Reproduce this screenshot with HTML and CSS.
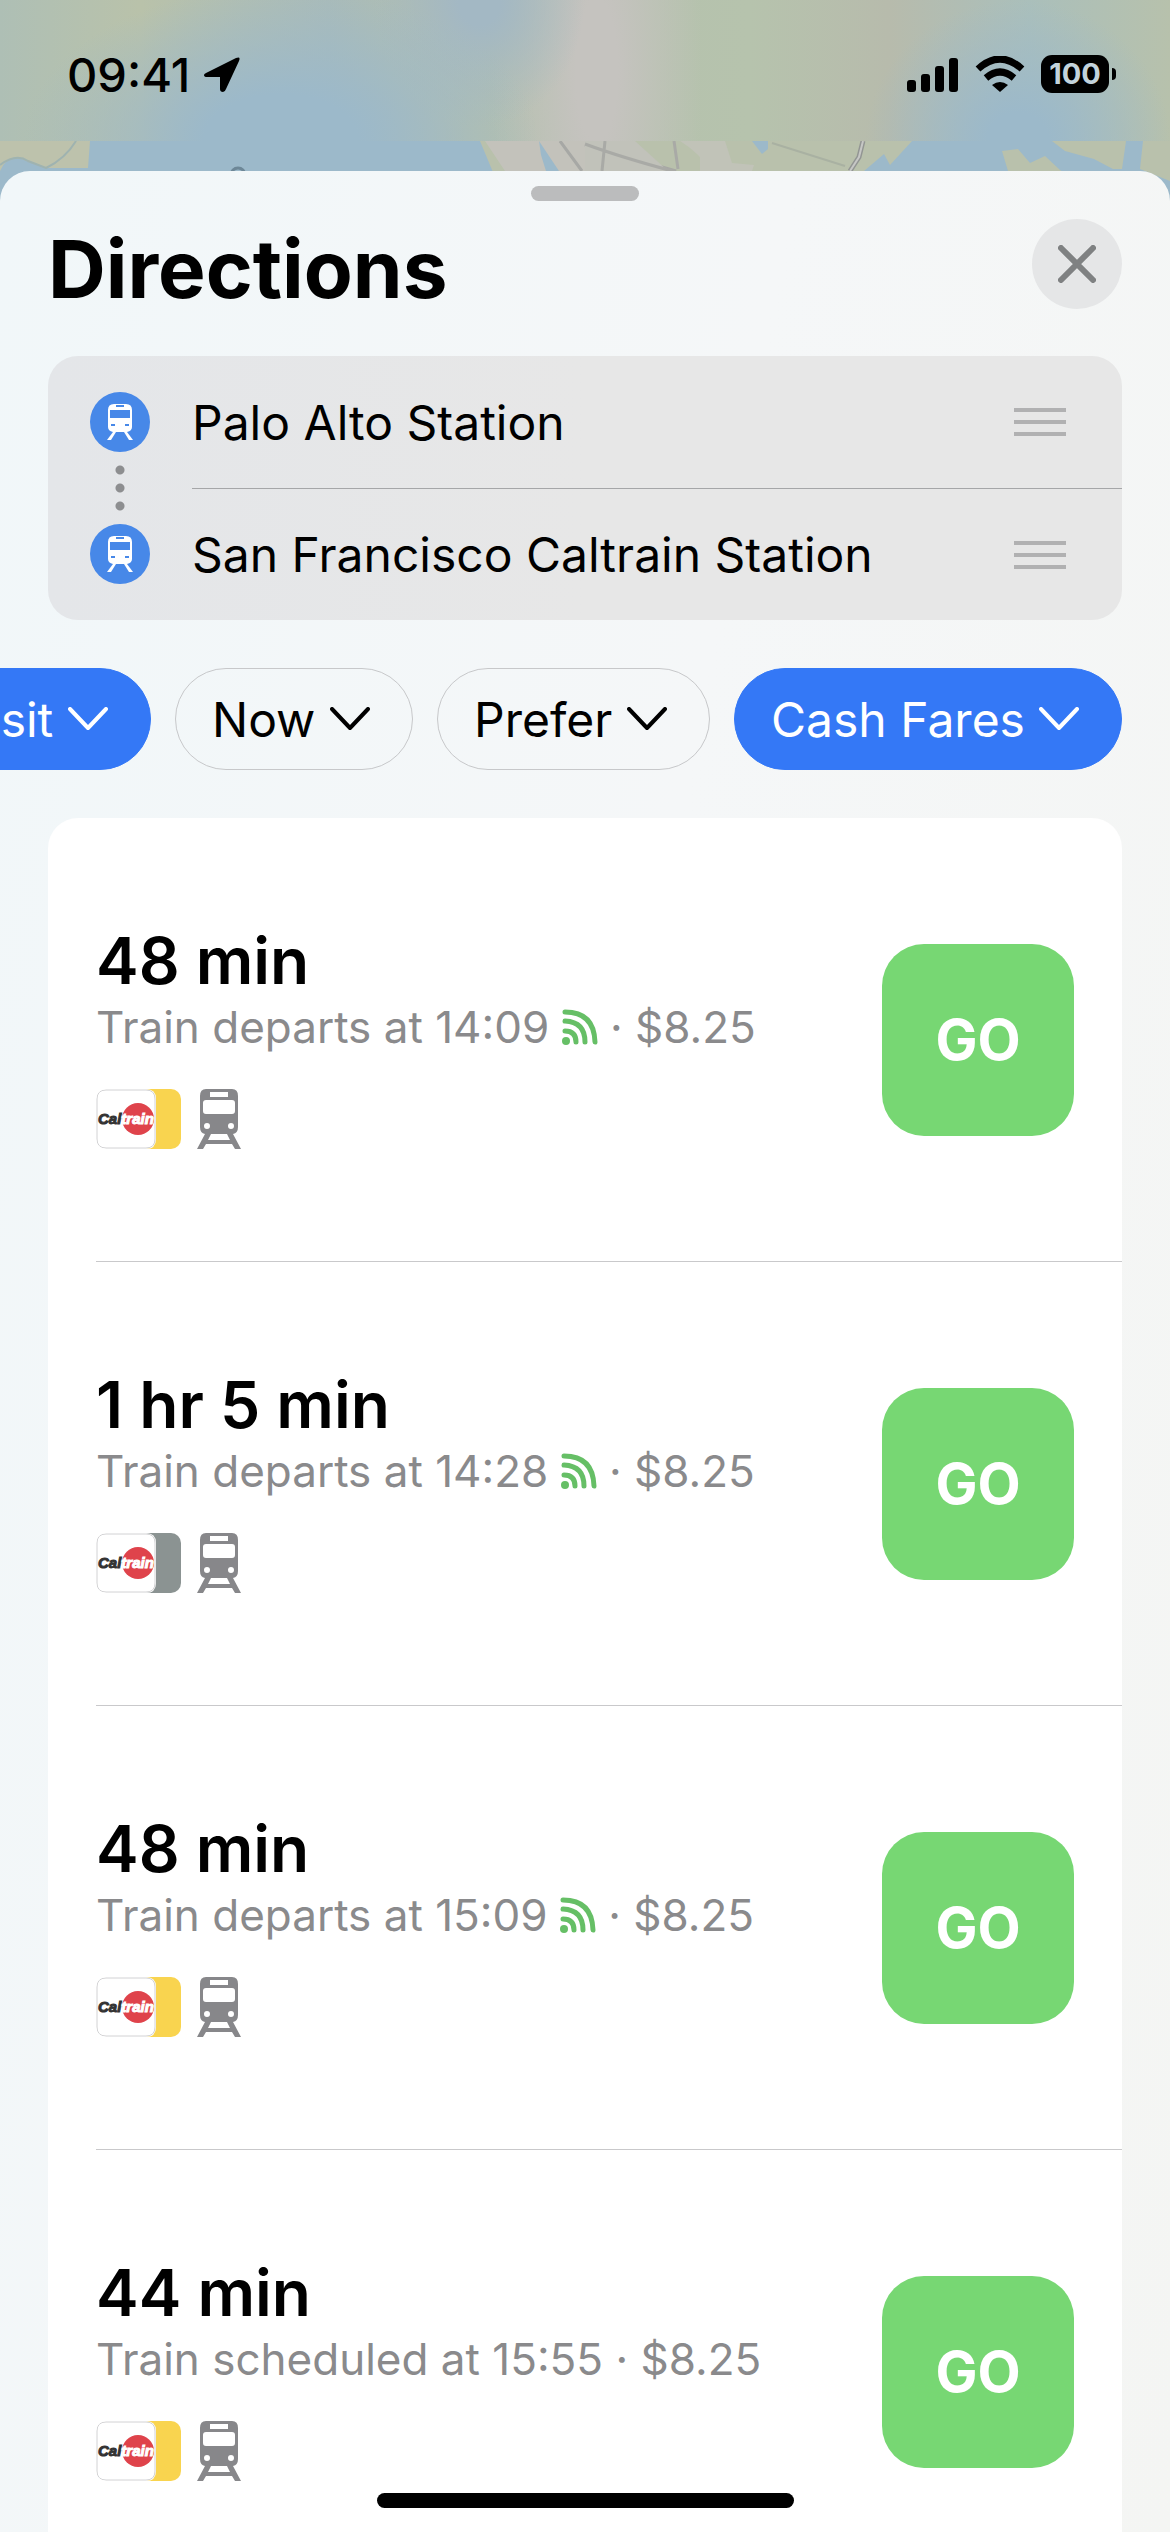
FILE: index.html
```html
<!DOCTYPE html>
<html lang="en">
<head>
    <meta charset="UTF-8">
    <meta name="viewport" content="width=device-width, initial-scale=1">
    <title>Directions</title>
    <link rel="stylesheet" href="styles.css">
</head>
<body>
<svg class="symbols" aria-hidden="true">
    <symbol id="tram" viewBox="0 0 44 60">
        <path fill-rule="evenodd" d="M9 0H35Q41 0 41 7V38Q41 44 36 45L44 60H38L35 55H9L6 60H0L8 45Q3 44 3 38V7Q3 0 9 0ZM13 3V8H31V3ZM9 11Q6 11 6 14V22Q6 25 9 25H35Q38 25 38 22V14Q38 11 35 11ZM10 34A3 3 0 1 0 10 40A3 3 0 1 0 10 34ZM34 34A3 3 0 1 0 34 40A3 3 0 1 0 34 34ZM14 45L11 51H33L30 45Z"/>
    </symbol>
    <symbol id="tramSmall" viewBox="0 0 26 36">
        <path fill-rule="evenodd" d="M7 0H19Q25 0 25 6V23Q25 27 20 28L26 36H22L17 28H9L4 36H0L6 28Q1 27 1 23V6Q1 0 7 0ZM9 1V3H17V1ZM3 6V14H23V6ZM4 20V22H8V20ZM18 20V22H22V20Z"/>
    </symbol>
    <symbol id="chevron" viewBox="0 0 40 24">
        <path d="M2 2L20 21L38 2" fill="none" stroke="currentColor" stroke-width="4" stroke-linecap="round" stroke-linejoin="round"/>
    </symbol>
    <symbol id="live" viewBox="0 0 36 36">
        <circle cx="4" cy="32" r="4" fill="currentColor"/>
        <path d="M3 22Q14 22 14 33M3 12Q23 13 23 33M3 3Q32 3 33 33" fill="none" stroke="currentColor" stroke-width="5" stroke-linecap="round"/>
    </symbol>
    <symbol id="handle" viewBox="0 0 54 28">
        <path d="M1 2H53M1 14H53M1 26H53" stroke="currentColor" stroke-width="4"/>
    </symbol>
    <symbol id="caltrain" viewBox="0 0 60 60">
        <path d="M0 0H50Q60 0 60 10V50Q60 60 50 60H0Z" fill="#fff"/>
        <path d="M50 1H10Q1 1 1 10V50Q1 59 10 59H50Q59 59 59 50V10Q59 1 50 1Z" fill="#fff" stroke="#d2d2d4" stroke-width="1"/>
        <circle cx="42" cy="30" r="16" fill="#df434b"/>
        <text x="2" y="35" class="logoText"><tspan fill="#333" stroke="#333">Cal</tspan><tspan fill="#fff" stroke="#fff">train</tspan></text>
    </symbol>
</svg>

<div class="app">
    <header class="statusBar">
        <div class="clock">
            <span>09:41</span>
            <svg width="36" height="35" viewBox="0 0 36 35"><path d="M2 16L32 1Q37 -1 35 4L22 32Q21 35 19 35Q16 35 16 32V20H3Q0 20 0 18Q0 17 2 16Z"/></svg>
        </div>
        <div class="indicators">
            <svg width="52" height="36" viewBox="0 0 52 36">
                <rect x="0" y="24" width="9" height="12" rx="3"/>
                <rect x="14" y="18" width="9" height="18" rx="3"/>
                <rect x="28" y="10" width="9" height="26" rx="3"/>
                <rect x="42" y="2" width="9" height="34" rx="3"/>
            </svg>
            <svg width="50" height="36" viewBox="0 0 50 36">
                <path d="M3 13Q25 -7 47 13" fill="none" stroke="#000" stroke-width="7"/>
                <path d="M11 22Q25 10 39 22" fill="none" stroke="#000" stroke-width="7"/>
                <path d="M17 29Q25 23 33 29L25 36Z"/>
            </svg>
            <div class="battery"><span>100</span></div>
        </div>
    </header>
    <svg class="map" viewBox="0 0 1170 60" preserveAspectRatio="none" aria-hidden="true">
        <rect width="1170" height="60" fill="#b9c1ac"/>
        <path d="M0 0H90V30H0Z" fill="#bdc2ac"/>
        <path d="M90 0H480L505 60H0V30Q8 12 22 18L45 27H88Z" fill="#9cb9ca"/>
        <path d="M0 24Q16 12 28 20L46 27Q65 18 76 0" fill="none" stroke="#9fb3b0" stroke-width="2"/>
        <path d="M485 0H585L640 30H505Z" fill="#c3c2bb"/>
        <path d="M539 0L559 30H546L541 14Z" fill="#9cb9ca"/>
        <path d="M560 0L582 30M585 4L676 30M605 0L602 30" fill="none" stroke="#a7a8a5" stroke-width="3"/>
        <path d="M585 0H635L668 30H585Z" fill="#c1c2ba"/>
        <path d="M585 3Q620 16 676 31M605 0L602 30M674 0L678 28" fill="none" stroke="#a9aaa6" stroke-width="3"/>
        <path d="M700 16Q718 14 740 30H700ZM680 0H725L732 22L754 24L752 30H710Q700 12 680 0Z" fill="#c1c3b8"/>
        <path d="M752 0H768V8L762 13Z" fill="#9cb9ca"/>
        <path d="M772 2L845 25" stroke="#a9b1a2" stroke-width="2"/>
        <path d="M863 0L859 16L850 30" fill="none" stroke="#929593" stroke-width="5"/>
        <path d="M863 0L859 16L850 30" fill="none" stroke="#c6c7c5" stroke-width="2"/>
        <path d="M912 0H1052L1065 10L1094 18L1113 28H1122L1126 0H1143L1140 28L1170 40V60H1110L1060 29L1045 15L1030 22L1018 8L1002 10L1008 30H864L884 13L890 24Z" fill="#9cb9ca"/>
        <circle cx="238" cy="34" r="7" fill="none" stroke="#6d8797" stroke-width="3"/>
    </svg>

    <main class="sheet">
        <div class="grabber"></div>
        <div class="titleRow">
            <h1>Directions</h1>
            <button class="close" type="button" aria-label="Close">
                <svg width="38" height="38" viewBox="0 0 38 38"><path d="M3 3L35 35M35 3L3 35" stroke="currentColor" stroke-width="6" stroke-linecap="round"/></svg>
            </button>
        </div>

        <ol class="stops">
            <li>
                <span class="stopIcon"><svg width="26" height="36"><use href="#tramSmall"/></svg></span>
                <div class="stopName">Palo Alto Station
                    <button type="button" aria-label="Move"><svg width="54" height="28"><use href="#handle"/></svg></button>
                </div>
            </li>
            <li>
                <span class="stopIcon"><svg width="26" height="36"><use href="#tramSmall"/></svg></span>
                <div class="stopName">San Francisco Caltrain Station
                    <button type="button" aria-label="Move"><svg width="54" height="28"><use href="#handle"/></svg></button>
                </div>
            </li>
        </ol>

        <div class="filters">
            <label class="chip active"><select aria-label="Mode"><option>Transit</option></select><svg width="40" height="24"><use href="#chevron"/></svg></label>
            <label class="chip"><select aria-label="Time"><option>Now</option></select><svg width="40" height="24"><use href="#chevron"/></svg></label>
            <label class="chip"><select aria-label="Prefer"><option>Prefer</option></select><svg width="40" height="24"><use href="#chevron"/></svg></label>
            <label class="chip active"><select aria-label="Fares"><option>Cash Fares</option></select><svg width="40" height="24"><use href="#chevron"/></svg></label>
        </div>

        <ul class="routes">
            <li class="route">
                <div class="routeInfo">
                    <h2>48 min</h2>
                    <p>Train departs at 14:09 <svg class="live" width="36" height="36"><use href="#live"/></svg> · $8.25</p>
                    <div class="lines">
                        <span class="badge yellow"><svg width="60" height="60"><use href="#caltrain"/></svg></span>
                        <svg class="tram" width="44" height="60"><use href="#tram"/></svg>
                    </div>
                </div>
                <button class="go" type="button">GO</button>
            </li>
            <li class="route">
                <div class="routeInfo">
                    <h2>1 hr 5 min</h2>
                    <p>Train departs at 14:28 <svg class="live" width="36" height="36"><use href="#live"/></svg> · $8.25</p>
                    <div class="lines">
                        <span class="badge gray"><svg width="60" height="60"><use href="#caltrain"/></svg></span>
                        <svg class="tram" width="44" height="60"><use href="#tram"/></svg>
                    </div>
                </div>
                <button class="go" type="button">GO</button>
            </li>
            <li class="route">
                <div class="routeInfo">
                    <h2>48 min</h2>
                    <p>Train departs at 15:09 <svg class="live" width="36" height="36"><use href="#live"/></svg> · $8.25</p>
                    <div class="lines">
                        <span class="badge yellow"><svg width="60" height="60"><use href="#caltrain"/></svg></span>
                        <svg class="tram" width="44" height="60"><use href="#tram"/></svg>
                    </div>
                </div>
                <button class="go" type="button">GO</button>
            </li>
            <li class="route">
                <div class="routeInfo">
                    <h2>44 min</h2>
                    <p>Train scheduled at 15:55 · $8.25</p>
                    <div class="lines">
                        <span class="badge yellow"><svg width="60" height="60"><use href="#caltrain"/></svg></span>
                        <svg class="tram" width="44" height="60"><use href="#tram"/></svg>
                    </div>
                </div>
                <button class="go" type="button">GO</button>
            </li>
        </ul>
    </main>
    <div class="homeBar"></div>
</div>
</body>
</html>
```
FILE: styles.css
```css
* {
    box-sizing: border-box;
}
body {
    margin: 0;
    font-family: Inter, "Liberation Sans", sans-serif;
    color: #000;
}
h1, h2, p, ol, ul {
    margin: 0;
    padding: 0;
}
ol, ul {
    list-style: none;
}
button, select {
    font: inherit;
    color: inherit;
    border: 0;
    padding: 0;
    background: none;
}
svg {
    display: block;
    flex: none;
}
.symbols {
    display: none;
}
.app {
    display: flex;
    flex-direction: column;
    height: 100vh;
    overflow: hidden;
}

/* status bar over the map */
.statusBar {
    display: flex;
    justify-content: space-between;
    flex: none;
    height: 141px;
    padding: 45px 54px 0 67px;
    background:
        radial-gradient(ellipse 22% 110% at 24% 100%, #9cb9ca 30%, transparent),
        radial-gradient(ellipse 13% 100% at 87% 100%, #9cb9ca 20%, transparent),
        radial-gradient(ellipse 9% 90% at 41% 0%, #a3b8c4 20%, transparent),
        radial-gradient(ellipse 9% 250% at 51% 50%, #c5c3bf 20%, transparent),
        linear-gradient(90deg, #aebfb5, #b9c2aa 12%, #a9bbb9 28%, #b3bfae 40%, #b6c3ad 64%, #b7bbac 76%, #aabfbb 88%, #b7c1ac);
}
.clock {
    display: flex;
    align-items: center;
    gap: 14px;
    height: 58px;
    font-size: 47px;
    font-weight: 500;
}
.indicators {
    display: flex;
    align-items: center;
    gap: 16px;
    height: 58px;
}
.battery {
    position: relative;
    width: 68px;
    height: 38px;
    margin-right: 7px;
    border-radius: 11px;
    background: #000;
    color: #c3d3dc;
    font-size: 29px;
    font-weight: 700;
    line-height: 38px;
    text-align: center;
}
.battery::after {
    content: "";
    position: absolute;
    left: 71px;
    top: 13px;
    width: 4px;
    height: 12px;
    border-radius: 0 6px 6px 0;
    background: #000;
}
.map {
    width: 100%;
    height: 60px;
}

.sheet {
    flex: 1;
    display: flex;
    flex-direction: column;
    min-height: 0;
    margin-top: -30px;
    padding-top: 15px;
    border-radius: 30px 30px 0 0;
    background: linear-gradient(100deg, #f1f7f9, #f5f7f8 50%, #f4f5f3);
    z-index: 1;
}
.grabber {
    flex: none;
    align-self: center;
    width: 108px;
    height: 15px;
    border-radius: 8px;
    background: #bbbcbd;
}
.titleRow {
    display: flex;
    justify-content: space-between;
    align-items: flex-start;
    flex: none;
    height: 155px;
    padding: 18px 48px 0;
}
h1 {
    font-size: 80px;
    font-weight: 700;
    line-height: 100px;
}
.close {
    display: flex;
    justify-content: center;
    align-items: center;
    width: 90px;
    height: 90px;
    border-radius: 50%;
    background: #e5e6e7;
    color: #7f8182;
}

.stops {
    flex: none;
    margin: 0 48px;
    padding-left: 42px;
    border-radius: 30px;
    background: linear-gradient(90deg, #e4e6e9, #e7e7e7 50%);
}
.stops li {
    position: relative;
    display: flex;
    align-items: center;
    gap: 42px;
    height: 132px;
}
/* three dots joining the two stops */
.stops li + li::before {
    content: "";
    position: absolute;
    left: 25px;
    top: -27px;
    width: 10px;
    height: 54px;
    background: radial-gradient(circle, #8d8e90 4px, transparent 5px) 0 0 / 10px 18px;
}
.stopIcon {
    display: flex;
    justify-content: center;
    align-items: center;
    width: 60px;
    height: 60px;
    border-radius: 50%;
    background: #4788e8;
    fill: #fff;
}
.stopName {
    flex: 1;
    display: flex;
    justify-content: space-between;
    align-items: center;
    height: 100%;
    padding-right: 55px;
    font-size: 48px;
}
.stops li + li .stopName {
    border-top: 1px solid #a5a6a8;
}
.stopName button {
    color: #b1b1b2;
}

.filters {
    display: flex;
    justify-content: flex-end;
    flex: none;
    gap: 24px;
    margin: 48px 0;
    padding-right: 48px;
    overflow: hidden;
}
.chip {
    display: flex;
    align-items: center;
    flex: none;
    gap: 14px;
    height: 102px;
    padding: 0 42px 0 36px;
    border: 1px solid #c7c8ca;
    border-radius: 51px;
    font-size: 48px;
}
.chip select {
    appearance: none;
}
.chip.active {
    border-color: #3478f6;
    background: #3478f6;
    color: #fff;
}

.routes {
    flex: 1;
    min-height: 0;
    margin: 0 48px;
    padding-left: 48px;
    border-radius: 30px 30px 0 0;
    background: #fff;
    overflow-y: auto;
    scrollbar-width: none;
}
.route {
    display: flex;
    justify-content: space-between;
    align-items: center;
    height: 444px;
    padding-right: 48px;
    border-bottom: 1px solid #c9c9cb;
}
.routeInfo {
    padding-bottom: 8px;
}
.routeInfo h2 {
    font-size: 64px;
    font-weight: 600;
    line-height: 76px;
}
.routeInfo p {
    color: #8a8a8c;
    font-size: 44px;
    line-height: 56px;
}
.live {
    display: inline-block;
    vertical-align: -2px;
    color: #66bf66;
}
.lines {
    display: flex;
    gap: 16px;
    padding-top: 34px;
}
.badge {
    width: 85px;
    height: 60px;
    border-radius: 10px;
    overflow: hidden;
}
.yellow {
    background: linear-gradient(90deg, #fff 40px, #f9d44f 40px);
}
.gray {
    background: linear-gradient(90deg, #fff 40px, #8b9392 40px);
}
.logoText {
    font: italic 700 15px "Liberation Sans", sans-serif;
}
.tram {
    fill: #87878a;
}
.go {
    width: 192px;
    height: 192px;
    border-radius: 42px;
    background: #77d773;
    color: #fff;
    font-size: 56px;
    font-weight: 700;
}
.homeBar {
    position: fixed;
    left: 50%;
    bottom: 24px;
    width: 417px;
    height: 15px;
    margin-left: -208px;
    border-radius: 8px;
    background: #000;
    z-index: 2;
}
```
